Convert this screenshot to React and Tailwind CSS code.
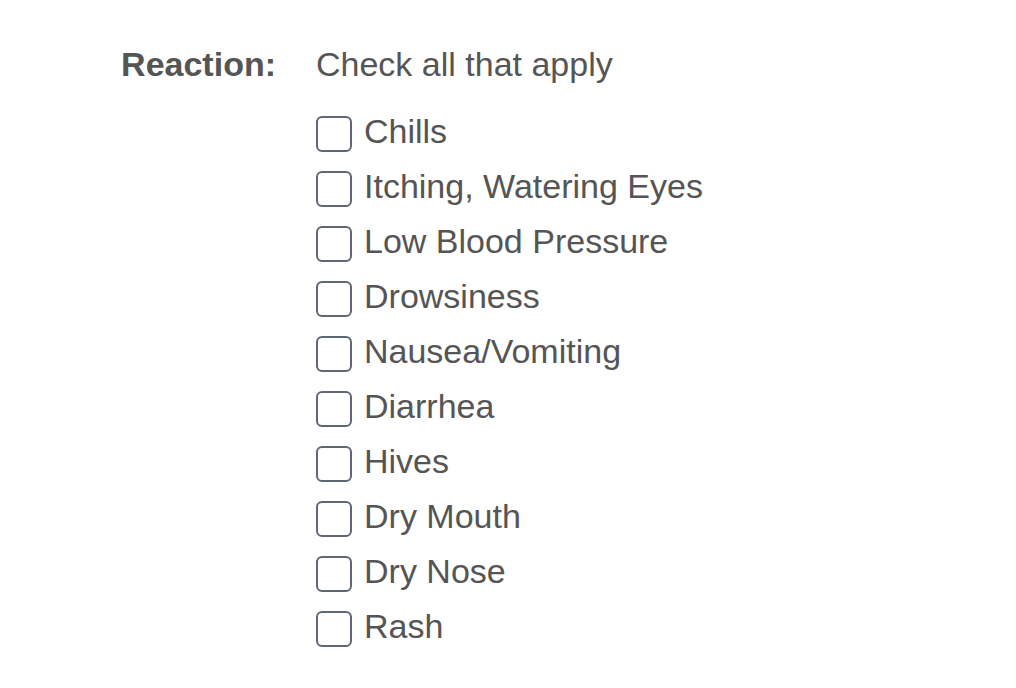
const reactions = [
  'Chills',
  'Itching, Watering Eyes',
  'Low Blood Pressure',
  'Drowsiness',
  'Nausea/Vomiting',
  'Diarrhea',
  'Hives',
  'Dry Mouth',
  'Dry Nose',
  'Rash',
];

function ReactionOption({ label }) {
  return (
    <li>
      <label className="flex w-fit items-start gap-3">
        <input
          type="checkbox"
          name="reaction"
          value={label}
          className="mt-1 size-9 shrink-0 appearance-none rounded-md border-2 border-[#616675] bg-white checked:bg-[#616675]"
        />
        <span className="leading-[38px]">{label}</span>
      </label>
    </li>
  );
}

export default function App() {
  return (
    <main className="min-h-screen bg-white px-6 pt-11 pb-8 font-['Liberation_Sans',Arial,sans-serif] text-[34px] text-[#555555]">
      <fieldset
        aria-labelledby="reaction-label"
        aria-describedby="reaction-hint"
        className="flex items-start gap-10"
      >
        <div id="reaction-label" className="w-[252px] shrink-0 text-right leading-10 font-bold">
          Reaction:
        </div>
        <div className="min-w-0 flex-1">
          <p id="reaction-hint" className="leading-10">Check all that apply</p>
          <ul className="mt-7 grid auto-rows-[55px]">
            {reactions.map((label) => (
              <ReactionOption key={label} label={label} />
            ))}
          </ul>
        </div>
      </fieldset>
    </main>
  );
}
